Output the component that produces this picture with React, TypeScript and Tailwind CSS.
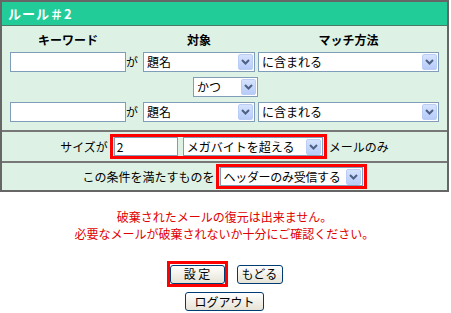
import React from "react";

const font = { fontFamily: '"Noto Sans CJK JP", "Noto Sans", sans-serif' };

function Arrow() {
  return (
    <div className="flex h-[16px] w-[15px] shrink-0 items-center justify-center rounded-[2px] border border-[#b9cdf7] bg-gradient-to-b from-[#d6e3fe] to-[#b6cbf8]">
      <svg width="9" height="6" viewBox="0 0 9 6">
        <path d="M1 1 L4.5 4.5 L8 1" fill="none" stroke="#4d6185" strokeWidth="2" />
      </svg>
    </div>
  );
}

function Sel({ className, label, labelClass = "" }: { className: string; label: string; labelClass?: string }) {
  return (
    <div className={"flex items-center justify-between overflow-hidden border border-[#7f9db9] bg-white pl-[3px] pr-[1px] " + className}>
      <span className={"whitespace-nowrap text-[12px] leading-none text-black " + labelClass}>{label}</span>
      <Arrow />
    </div>
  );
}

function Inp({ className, value }: { className: string; value?: string }) {
  return (
    <div className={"flex items-center border border-[#7f9db9] bg-white pl-[2px] text-[12px] leading-none text-black " + className}>
      {value}
    </div>
  );
}

function Btn({ className, label }: { className: string; label: string }) {
  return (
    <div className={"flex items-center justify-center whitespace-nowrap rounded-[3px] border border-[#003c74] bg-gradient-to-b from-white to-[#e6e3d6] text-[12px] leading-none text-black " + className}>
      {label}
    </div>
  );
}

function Row() {
  return (
    <div className="flex items-center">
      <Inp className="h-[20px] w-[116px]" />
      <span className="w-[17px] text-[12px] leading-none">が</span>
      <Sel className="h-[20px] w-[112px]" label="題名" />
      <div className="w-[3px]" />
      <Sel className="h-[20px] w-[181px]" label="に含まれる" />
    </div>
  );
}

export default function App() {
  return (
    <div className="w-[451px] h-[313px] bg-white text-black" style={font}>
      <div className="w-[449px] border-2 border-[#666666]">
        <div className="flex h-[24px] items-center border-b border-[#4a7a66] bg-[#22cc98] pl-[6px] text-[13px] font-bold leading-none tracking-[1px] text-white">
          ルール＃2
        </div>
        <div className="bg-[#ddf2e5]">
          <div className="flex flex-col pl-[8px] pt-[7px] pb-[8px]">
            <div className="flex h-[14px] items-center text-[12px] font-bold leading-none">
              <span className="w-[116px] text-center">キーワード</span>
              <span className="w-[17px]" />
              <span className="w-[112px] text-center">対象</span>
              <span className="w-[3px]" />
              <span className="w-[181px] text-center">マッチ方法</span>
            </div>
            <div className="mt-[5px] flex flex-col gap-[5px]">
              <Row />
              <div className="flex h-[20px] items-center">
                <div className="w-[183px]" />
                <Sel className="h-[20px] w-[65px]" label="かつ" />
              </div>
              <Row />
            </div>
          </div>
          <div className="flex h-[31px] items-center justify-center border-t-2 border-[#777777] text-[12px] leading-none">
            <span className="whitespace-nowrap">サイズが</span>
            <div className="ml-[2px] flex items-center gap-[5px] border-[3px] border-[#ff0000] px-[1px]">
              <Inp className="h-[19px] w-[64px]" value="2" />
              <Sel className="h-[19px] w-[140px]" label="メガバイトを超える" />
            </div>
            <span className="ml-[2px] whitespace-nowrap">メールのみ</span>
          </div>
          <div className="flex h-[29px] items-center justify-center border-t-2 border-[#777777] text-[12px] leading-none">
            <span className="whitespace-nowrap">この条件を満たすものを</span>
            <div className="ml-[1px] flex items-center border-[3px] border-[#ff0000] px-[1px]">
              <Sel className="h-[19px] w-[143px]" label="ヘッダーのみ受信する" labelClass="tracking-[-0.3px]" />
            </div>
          </div>
        </div>
      </div>
      <div className="w-[449px]">
        <div className="mt-[16px] flex flex-col items-center text-[12px] leading-[17px] text-[#e00000]">
          <span>破棄されたメールの復元は出来ません。</span>
          <span>必要なメールが破棄されないか十分にご確認ください。</span>
        </div>
        <div className="mt-[19px] flex items-center justify-center gap-[9px]">
          <div className="flex h-[26px] w-[61px] items-center justify-center border-[3px] border-[#ff0000]">
            <Btn className="h-[19px] w-[55px]" label="設 定" />
          </div>
          <Btn className="h-[19px] w-[46px]" label="もどる" />
        </div>
        <div className="mt-[5px] flex justify-center">
          <Btn className="h-[19px] w-[79px]" label="ログアウト" />
        </div>
      </div>
    </div>
  );
}
